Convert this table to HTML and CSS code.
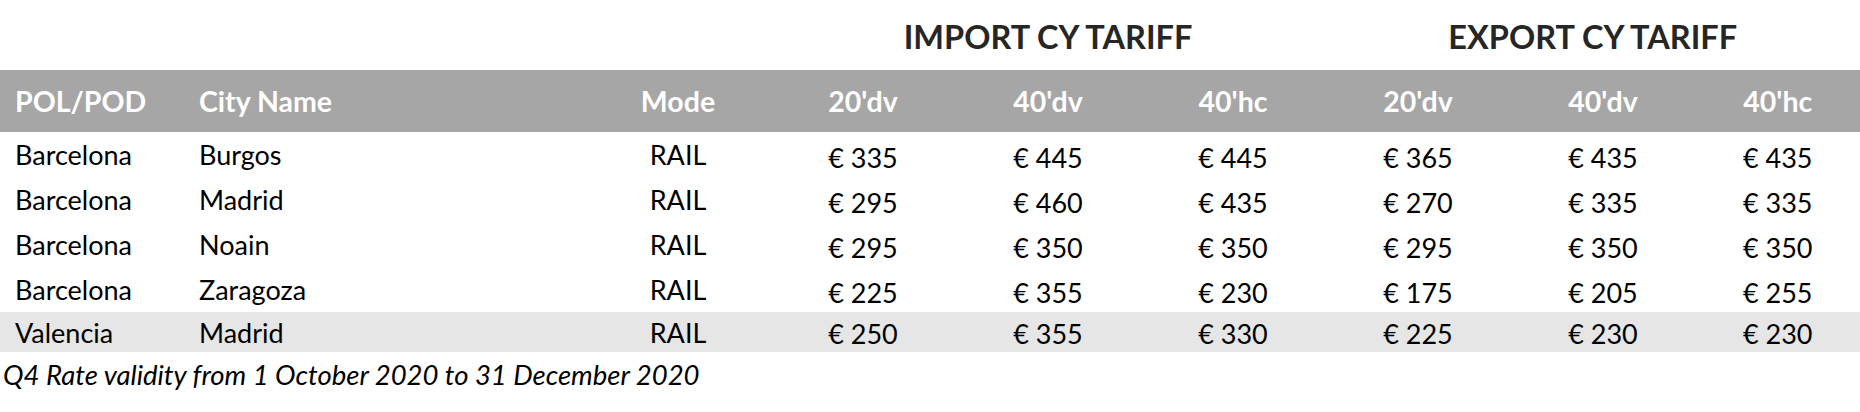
FILE: index.html
```html
<!DOCTYPE html>
<html>
<head>
<meta charset="utf-8">
<link rel="stylesheet" href="styles.css">
</head>
<body>
<div class="sheet">
  <div class="groups">
    <div class="g-spacer"></div>
    <div class="g-title">IMPORT CY TARIFF</div>
    <div class="g-title">EXPORT CY TARIFF</div>
  </div>
  <div class="row head">
    <div class="c left first">POL/POD</div>
    <div class="c left">City Name</div>
    <div class="c">Mode</div>
    <div class="c">20'dv</div>
    <div class="c">40'dv</div>
    <div class="c">40'hc</div>
    <div class="c">20'dv</div>
    <div class="c">40'dv</div>
    <div class="c">40'hc</div>
  </div>
  <div class="row data">
    <div class="c left first">Barcelona</div><div class="c left">Burgos</div><div class="c">RAIL</div>
    <div class="c v">€ 335</div><div class="c v">€ 445</div><div class="c v">€ 445</div>
    <div class="c v">€ 365</div><div class="c v">€ 435</div><div class="c v">€ 435</div>
  </div>
  <div class="row data">
    <div class="c left first">Barcelona</div><div class="c left">Madrid</div><div class="c">RAIL</div>
    <div class="c v">€ 295</div><div class="c v">€ 460</div><div class="c v">€ 435</div>
    <div class="c v">€ 270</div><div class="c v">€ 335</div><div class="c v">€ 335</div>
  </div>
  <div class="row data">
    <div class="c left first">Barcelona</div><div class="c left">Noain</div><div class="c">RAIL</div>
    <div class="c v">€ 295</div><div class="c v">€ 350</div><div class="c v">€ 350</div>
    <div class="c v">€ 295</div><div class="c v">€ 350</div><div class="c v">€ 350</div>
  </div>
  <div class="row data">
    <div class="c left first">Barcelona</div><div class="c left">Zaragoza</div><div class="c">RAIL</div>
    <div class="c v">€ 225</div><div class="c v">€ 355</div><div class="c v">€ 230</div>
    <div class="c v">€ 175</div><div class="c v">€ 205</div><div class="c v">€ 255</div>
  </div>
  <div class="row data shaded">
    <div class="c left first">Valencia</div><div class="c left">Madrid</div><div class="c">RAIL</div>
    <div class="c v">€ 250</div><div class="c v">€ 355</div><div class="c v">€ 330</div>
    <div class="c v">€ 225</div><div class="c v">€ 230</div><div class="c v">€ 230</div>
  </div>
  <div class="note">Q4 Rate validity from 1 October 2020 to 31 December 2020</div>
</div>
</body>
</html>
```
FILE: styles.css
```css
html, body {
  margin: 0;
  padding: 0;
  background: #ffffff;
}
body {
  font-family: Lato, "Open Sans", "Liberation Sans", sans-serif;
  color: #000000;
  width: 1860px;
  height: 412px;
  overflow: hidden;
}
.sheet {
  width: 1860px;
}
.groups {
  display: grid;
  grid-template-columns: 770.5px 555px 1fr;
  height: 70px;
  align-items: center;
}
.g-title {
  text-align: center;
  font-weight: 700;
  font-size: 32.5px;
  color: #262626;
  padding-top: 2px;
}
.row {
  display: grid;
  grid-template-columns: 199px 386.5px repeat(6, 185px) 1fr;
  align-items: center;
}
.head {
  height: 62px;
  background: #a6a6a6;
  color: #ffffff;
  font-weight: 700;
  font-size: 28.5px;
}
.data {
  height: 45px;
  font-size: 27px;
}
.data.shaded {
  height: 40px;
  background: #e6e6e6;
}
.c {
  text-align: center;
  white-space: nowrap;
}
.c.left {
  text-align: left;
}
.c.first {
  padding-left: 15px;
}
.data .c.v {
  padding-top: 6px;
}
.data.shaded .c.v {
  padding-top: 2px;
}
.note {
  font-style: italic;
  font-size: 27.5px;
  padding-left: 3px;
  height: 48px;
  line-height: 46px;
  color: #000000;
}
```
